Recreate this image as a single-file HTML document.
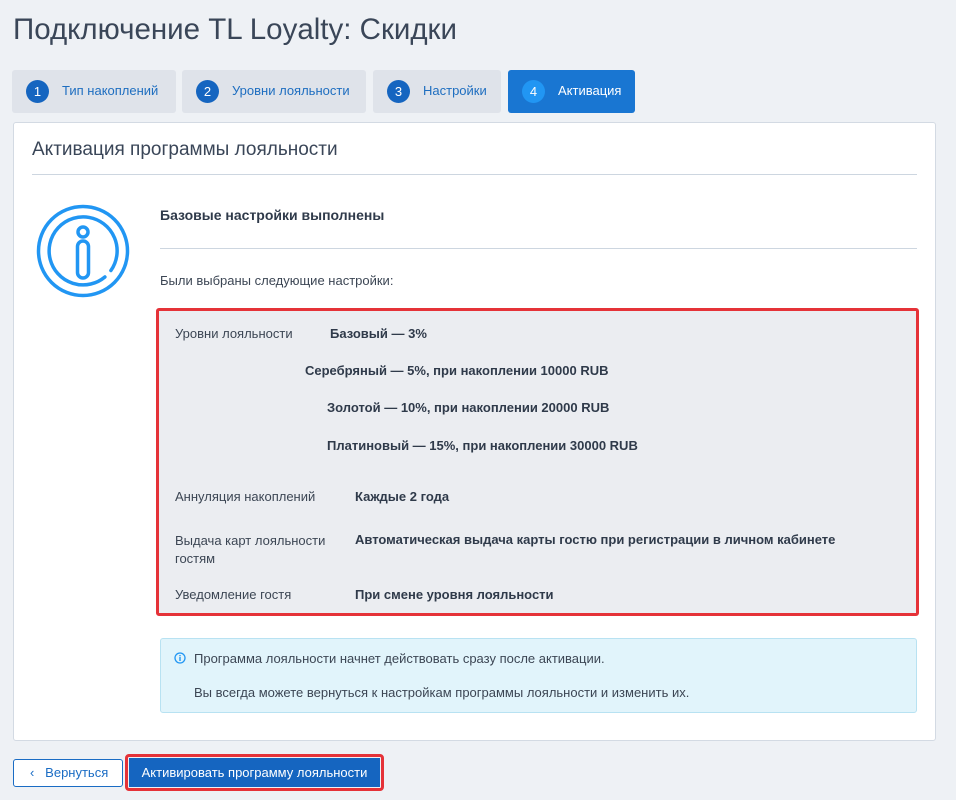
<!DOCTYPE html>
<html><head><meta charset="utf-8"><style>
*{box-sizing:border-box;margin:0;padding:0}
body{width:956px;height:800px;background:#eef1f5;font-family:"Liberation Sans","DejaVu Sans",sans-serif;color:#333d4a;position:relative;overflow:hidden}
.abs{position:absolute}
h1{position:absolute;left:13px;top:13px;font-size:29.5px;font-weight:normal;color:#3a4658}
.tab{position:absolute;top:70px;height:43px;background:#dfe3ea;border-radius:3px;font-size:13px;color:#1e6ec0}
.tab .n{position:absolute;left:14px;top:10px;width:23px;height:23px;border-radius:50%;background:#1565c0;color:#fff;text-align:center;line-height:23px;font-size:13px}
.tab .t{position:absolute;left:50px;top:13px;white-space:nowrap}
.card{position:absolute;left:13px;top:122px;width:923px;height:619px;background:#fff;border:1px solid #d3dae3;border-radius:3px}
.lbl{position:absolute;font-size:13px;color:#3c4654}
.b{position:absolute;font-size:13px;font-weight:bold;color:#2f3a4a;white-space:nowrap}
</style></head><body>
<h1>Подключение TL Loyalty: Скидки</h1>
<div class="tab" style="left:12px;width:164px"><div class="n">1</div><div class="t">Тип накоплений</div></div>
<div class="tab" style="left:182px;width:184px"><div class="n">2</div><div class="t">Уровни лояльности</div></div>
<div class="tab" style="left:373px;width:128px"><div class="n">3</div><div class="t">Настройки</div></div>
<div class="tab" style="left:508px;width:127px;background:#1976d2;color:#fff"><div class="n" style="background:#2196f3">4</div><div class="t">Активация</div></div>
<div class="card"></div>
<div class="abs" style="left:32px;top:139px;font-size:19px;color:#3a4658">Активация программы лояльности</div>
<div class="abs" style="left:32px;top:174px;width:885px;height:1px;background:#cdd6e0"></div>
<svg class="abs" style="left:36px;top:204px" width="94" height="94" viewBox="0 0 94 94" fill="none" stroke="#2196f3" stroke-width="3.5" stroke-linecap="round">
<circle cx="47" cy="47" r="44.5"/>
<path d="M68.9 73 A34 34 0 1 1 74.9 66.5"/>
<circle cx="47" cy="28" r="5"/>
<rect x="41.5" y="37" width="11" height="37" rx="5.5"/>
</svg>
<div class="b" style="left:160px;top:207px;font-size:14px">Базовые настройки выполнены</div>
<div class="abs" style="left:160px;top:248px;width:757px;height:1px;background:#cdd6e0"></div>
<div class="lbl" style="left:160px;top:273px">Были выбраны следующие настройки:</div>
<div class="abs" style="left:156px;top:308px;width:763px;height:308px;border:3px solid #e53238;border-radius:3px;background:#ebedf1"></div>
<div class="lbl" style="left:175px;top:326px">Уровни лояльности</div>
<div class="b" style="left:330px;top:326px">Базовый — 3%</div>
<div class="b" style="left:305px;top:363px">Серебряный — 5%, при накоплении 10000 RUB</div>
<div class="b" style="left:327px;top:400px">Золотой — 10%, при накоплении 20000 RUB</div>
<div class="b" style="left:327px;top:438px">Платиновый — 15%, при накоплении 30000 RUB</div>
<div class="lbl" style="left:175px;top:489px">Аннуляция накоплений</div>
<div class="b" style="left:355px;top:489px">Каждые 2 года</div>
<div class="lbl" style="left:175px;top:532px;line-height:18px">Выдача карт лояльности<br>гостям</div>
<div class="b" style="left:355px;top:532px">Автоматическая выдача карты гостю при регистрации в личном кабинете</div>
<div class="lbl" style="left:175px;top:587px">Уведомление гостя</div>
<div class="b" style="left:355px;top:587px">При смене уровня лояльности</div>
<div class="abs" style="left:160px;top:638px;width:757px;height:75px;background:#e1f4fb;border:1px solid #b8e2f2;border-radius:3px"></div>
<svg class="abs" style="left:174px;top:652px" width="12" height="12" viewBox="0 0 12 12"><circle cx="6" cy="6" r="5" fill="none" stroke="#2196f3" stroke-width="1.3"/><rect x="5.3" y="5" width="1.4" height="4" fill="#2196f3"/><rect x="5.3" y="3" width="1.4" height="1.3" fill="#2196f3"/></svg>
<div class="lbl" style="left:194px;top:651px">Программа лояльности начнет действовать сразу после активации.</div>
<div class="lbl" style="left:194px;top:685px">Вы всегда можете вернуться к настройкам программы лояльности и изменить их.</div>
<div class="abs" style="left:13px;top:759px;width:110px;height:28px;border:1px solid #1a6cc4;border-radius:3px;background:#fff;color:#1a6cc4;font-size:13px;line-height:26px;padding-left:16px">‹&nbsp;&nbsp;&nbsp;Вернуться</div>
<div class="abs" style="left:125px;top:754px;width:259px;height:37px;border:3px solid #e53238;border-radius:4px"></div>
<div class="abs" style="left:129px;top:758px;width:251px;height:29px;background:#1565c0;color:#fff;font-size:13px;line-height:29px;text-align:center">Активировать программу лояльности</div>
</body></html>
